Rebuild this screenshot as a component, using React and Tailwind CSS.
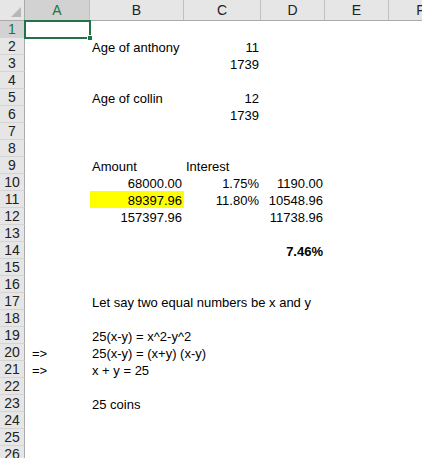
import React from "react";

const cols = [
  { key: "A", w: "w-[65px]" },
  { key: "B", w: "w-[94px]" },
  { key: "C", w: "w-[77px]" },
  { key: "D", w: "w-[64px]" },
  { key: "E", w: "w-[64px]" },
  { key: "F", w: "w-[64px]" },
];

// cell values: [text, align, extra]
const data = {
  2: { B: ["Age of anthony", "left"], C: ["11", "right"] },
  3: { C: ["1739", "right"] },
  5: { B: ["Age of collin", "left"], C: ["12", "right"] },
  6: { C: ["1739", "right"] },
  9: { B: ["Amount", "left"], C: ["Interest", "left"] },
  10: { B: ["68000.00", "right"], C: ["1.75%", "right"], D: ["1190.00", "right"] },
  11: { B: ["89397.96", "right", "fill"], C: ["11.80%", "right"], D: ["10548.96", "right"] },
  12: { B: ["157397.96", "right"], D: ["11738.96", "right"] },
  14: { D: ["7.46%", "right", "bold"] },
  17: { B: ["Let say two equal numbers be x and y", "left"] },
  19: { B: ["25(x-y) = x^2-y^2", "left"] },
  20: { A: ["=>", "indent"], B: ["25(x-y) = (x+y) (x-y)", "left"] },
  21: { A: ["=>", "indent"], B: ["x + y = 25", "left"] },
  23: { B: ["25 coins", "left"] },
};

const rows = Array.from({ length: 26 }, (_, i) => i + 1);

function Cell({ col, value, selected }) {
  const [text, align, extra] = value || [];
  const alignCls =
    align === "right"
      ? "justify-end pr-[2px]"
      : align === "indent"
      ? "justify-start pl-[7px]"
      : "justify-start pl-[2px]";
  return (
    <div
      className={`relative ${col.w} shrink-0 h-[17px] flex items-end ${alignCls} ${
        extra === "fill" ? "bg-[#ffff00]" : ""
      }`}
    >
      {text && (
        <span
          className={`whitespace-nowrap leading-[15px] h-[15px] ${extra === "bold" ? "font-bold" : ""}`}
        >
          {text}
        </span>
      )}
      {selected && (
        <>
          <div className="absolute -left-px -top-px -right-px -bottom-px border-2 border-[#217346] z-10" />
          <div className="absolute -right-[3px] -bottom-[3px] w-[6px] h-[6px] bg-[#217346] border border-white z-20" />
        </>
      )}
    </div>
  );
}

export default function App() {
  return (
    <div className="w-[422px] h-[458px] overflow-hidden bg-white text-black text-[13px] font-['Liberation_Sans',Arial,sans-serif]">
      {/* column headers */}
      <div className="flex h-[21px] bg-[#e6e6e6] border-b border-[#ababab]">
        <div className="w-[25px] shrink-0 border-r border-[#ababab] relative">
          <svg className="absolute right-[3px] bottom-[3px]" width="10" height="10" viewBox="0 0 10 10">
            <polygon points="10,0 10,10 0,10" fill="#b7b7b7" />
          </svg>
        </div>
        {cols.map((c) => (
          <div
            key={c.key}
            className={`${c.w} shrink-0 border-r border-[#c0c0c0] flex items-center justify-center text-[14px] ${
              c.key === "A" ? "bg-[#d2d2d2] text-[#217346]" : "text-[#222]"
            }`}
          >
            {c.key}
          </div>
        ))}
      </div>
      {rows.map((r) => (
        <div key={r} className="flex h-[17px]">
          <div
            className={`w-[25px] shrink-0 h-[17px] border-r border-[#ababab] border-b border-b-[#d4d4d4] flex items-center justify-center text-[14px] leading-[16px] ${
              r === 1 ? "bg-[#d2d2d2] text-[#217346]" : "bg-[#e6e6e6] text-[#222]"
            }`}
          >
            {r}
          </div>
          {cols.map((c) => (
            <Cell key={c.key} col={c} value={data[r]?.[c.key]} selected={r === 1 && c.key === "A"} />
          ))}
        </div>
      ))}
    </div>
  );
}
